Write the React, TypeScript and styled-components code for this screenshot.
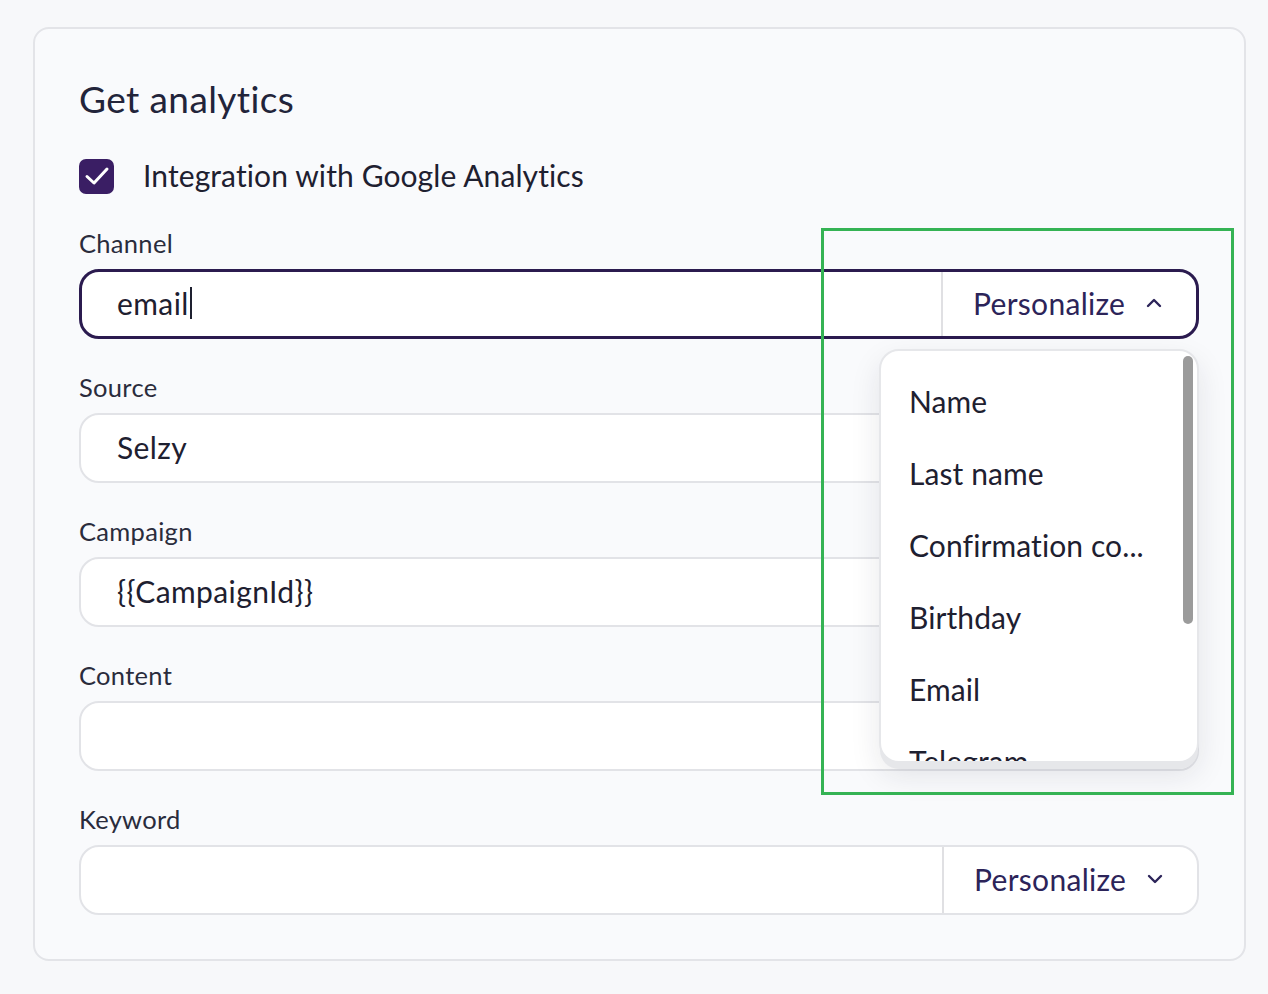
import React from "react";
import styled, { createGlobalStyle } from "styled-components";

const Global = createGlobalStyle`
  html, body { margin: 0; padding: 0; background: #f7f8fa; }
  body { font-family: "Lato", "Noto Sans", sans-serif; color: #1e2030; }
  * { box-sizing: border-box; }
`;

const Page = styled.div`
  position: relative;
  width: 1268px;
  height: 994px;
  padding: 27px 22px 0 33px;
`;

const Card = styled.section`
  width: 1213px;
  height: 934px;
  border: 2px solid #e3e4e8;
  border-radius: 16px;
  background: #f9fafc;
  padding: 49px 45px 44px 44px;
  display: flex;
  flex-direction: column;
`;

const Title = styled.h2`
  margin: 0;
  height: 44px;
  line-height: 42px;
  font-size: 37px;
  letter-spacing: 0.4px;
  font-weight: 400;
  color: #22243a;
`;

const CheckRow = styled.label`
  margin-top: 35px;
  height: 36px;
  display: flex;
  align-items: center;
  gap: 29px;
  font-size: 30px;
  letter-spacing: 0.1px;
  color: #1e2030;
  line-height: 34px;
`;

const CheckBox = styled.span`
  width: 35px;
  height: 35px;
  margin-top: 2px;
  border-radius: 7px;
  background: #3a1e64;
  display: flex;
  align-items: center;
  justify-content: center;
`;

const Fields = styled.div`
  margin-top: 36px;
  display: flex;
  flex-direction: column;
  gap: 34px;
`;

const Field = styled.div`
  position: relative;
  display: flex;
  flex-direction: column;
  gap: 10px;
`;

const Label = styled.div`
  height: 30px;
  line-height: 28px;
  font-size: 25.5px;
  letter-spacing: 0.3px;
  color: #2a2c3c;
`;

const InputBox = styled.div<{ $active?: boolean }>`
  height: 70px;
  display: flex;
  align-items: stretch;
  background: #fff;
  border: ${(p) => (p.$active ? "3px solid #2b1b4f" : "2px solid #e2e3e7")};
  border-radius: 20px;
  overflow: hidden;
`;

const InputText = styled.div<{ $active?: boolean }>`
  flex: 1;
  display: flex;
  align-items: center;
  padding-left: ${(p) => (p.$active ? "35px" : "36px")};
  padding-bottom: 2px;
  font-size: 30px;
  letter-spacing: 0.4px;
  color: #1e2030;
`;

const Caret = styled.span`
  display: inline-block;
  width: 2px;
  height: 32px;
  background: #1e2030;
  margin-left: 1px;
`;

const PersonalizeButton = styled.div`
  width: 255px;
  flex: none;
  display: flex;
  align-items: center;
  gap: 21px;
  padding-left: 30px;
  padding-bottom: 2px;
  border-left: 2px solid #e0e0e3;
  font-size: 30px;
  letter-spacing: 0.3px;
  color: #2c2459;
`;

const Dropdown = styled.div`
  position: absolute;
  right: 0;
  top: 120px;
  width: 320px;
  height: 414px;
  background: #fff;
  border: 2px solid #e6e7ea;
  border-radius: 20px;
  box-shadow: 0 7px 0 -1px #e6e7ea, 0 12px 30px rgba(30, 32, 48, 0.1);
  overflow: hidden;
  z-index: 2;
`;

const Menu = styled.ul`
  list-style: none;
  margin: 0;
  padding: 14px 0 0 28px;
`;

const MenuItem = styled.li`
  height: 72px;
  line-height: 72px;
  font-size: 30px;
  letter-spacing: 0.1px;
  color: #1e2030;
  white-space: nowrap;
`;

const ScrollThumb = styled.div`
  position: absolute;
  right: 4px;
  top: 5px;
  width: 10px;
  height: 268px;
  border-radius: 5px;
  background: #9b9b9b;
`;

const Annotation = styled.div`
  position: absolute;
  left: 821px;
  top: 228px;
  width: 413px;
  height: 567px;
  border: 3px solid #35b354;
  pointer-events: none;
  z-index: 3;
`;

const Chevron = ({ up }: { up?: boolean }) => (
  <svg width="16" height="10" viewBox="0 0 16 10" fill="none">
    <path
      d={up ? "M2 8 L8 2 L14 8" : "M2 2 L8 8 L14 2"}
      stroke="#2c2459"
      strokeWidth="2.4"
      strokeLinecap="round"
      strokeLinejoin="round"
    />
  </svg>
);

const fields = [
  { label: "Source", value: "Selzy" },
  { label: "Campaign", value: "{{CampaignId}}" },
  { label: "Content", value: "" },
];

const menuItems = ["Name", "Last name", "Confirmation co...", "Birthday", "Email", "Telegram"];

export default function App() {
  return (
    <>
      <Global />
      <Page>
        <Card>
          <Title>Get analytics</Title>
          <CheckRow>
            <CheckBox>
              <svg width="28" height="24" viewBox="0 0 28 24" fill="none">
                <path
                  d="M4 12.5 L11 19 L24 5"
                  stroke="#fff"
                  strokeWidth="3"
                  strokeLinecap="round"
                  strokeLinejoin="round"
                />
              </svg>
            </CheckBox>
            Integration with Google Analytics
          </CheckRow>
          <Fields>
            <Field>
              <Label>Channel</Label>
              <InputBox $active>
                <InputText $active>
                  email
                  <Caret />
                </InputText>
                <PersonalizeButton>
                  Personalize
                  <Chevron up />
                </PersonalizeButton>
              </InputBox>
              <Dropdown>
                <Menu>
                  {menuItems.map((m) => (
                    <MenuItem key={m}>{m}</MenuItem>
                  ))}
                </Menu>
                <ScrollThumb />
              </Dropdown>
            </Field>
            {fields.map((f) => (
              <Field key={f.label}>
                <Label>{f.label}</Label>
                <InputBox>
                  <InputText>{f.value}</InputText>
                </InputBox>
              </Field>
            ))}
            <Field>
              <Label>Keyword</Label>
              <InputBox>
                <InputText />
                <PersonalizeButton>
                  Personalize
                  <Chevron />
                </PersonalizeButton>
              </InputBox>
            </Field>
          </Fields>
        </Card>
        <Annotation />
      </Page>
    </>
  );
}
